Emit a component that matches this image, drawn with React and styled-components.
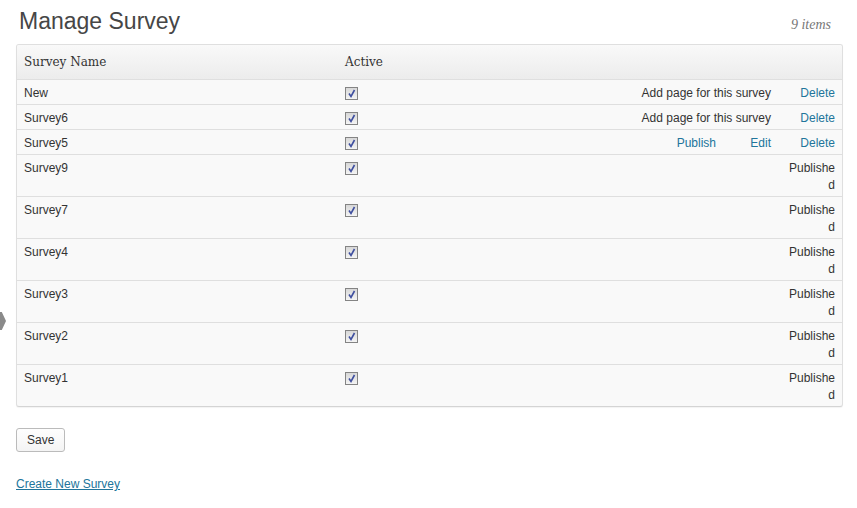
import React from "react";
import styled, { createGlobalStyle } from "styled-components";

const GlobalStyle = createGlobalStyle`
  body {
    margin: 0;
    background: #fff;
    font-family: "Liberation Sans", Arial, sans-serif;
    font-size: 12px;
    color: #333;
  }
`;

const Page = styled.div`
  position: relative;
  padding: 7px 14px 0 16px;
`;

// flèche du menu latéral, posée sur le bord gauche
const MenuArrow = styled.span`
  position: absolute;
  left: 0;
  top: 312px;
  width: 6px;
  height: 18px;
  background: #8a8a8a;
  clip-path: polygon(0 0, 30% 0, 100% 50%, 30% 100%, 0 100%);
`;

const Header = styled.div`
  display: flex;
  justify-content: space-between;
  align-items: baseline;
  height: 37px;
`;

const Title = styled.h2`
  margin: 0 0 0 3px;
  font-size: 23px;
  font-weight: normal;
  line-height: 29px;
  color: #464646;
`;

const Count = styled.span`
  margin-right: 12px;
  font-family: "Liberation Serif", Georgia, serif;
  font-style: italic;
  font-size: 14px;
  color: #777;
`;

const Table = styled.div`
  border: 1px solid #dfdfdf;
  border-bottom-color: #d4d4d4;
  border-radius: 3px;
  background: #f9f9f9;
  box-shadow: 0 1px 1px rgba(0, 0, 0, 0.05);
  overflow: hidden;
`;

const Row = styled.div`
  display: grid;
  grid-template-columns: 320px 1fr 60px 55px 62px;
  border-top: 1px solid #dfdfdf;

  &:first-child {
    border-top: none;
  }
`;

const HeadRow = styled(Row)`
  background: linear-gradient(to bottom, #f9f9f9, #ececec);
`;

const HeadCell = styled.div`
  padding: 0 8px;
  line-height: 34px;
  font-family: "DejaVu Serif", Georgia, serif;
  font-size: 12px;
  color: #333;

  &:first-child {
    padding-left: 7px;
  }
`;

const Cell = styled.div`
  padding: 5px 9px 2px 8px;
  line-height: 17px;
  text-align: ${(p) => p.$align || "left"};
  overflow-wrap: anywhere;
  color: #333;

  &:first-child {
    padding-left: 7px;
  }

  &:last-child {
    padding-right: 7px;
  }
`;

// cellule "Add page" : déborde vers la gauche sans passer à la ligne
const WideCell = styled(Cell)`
  grid-column: 3 / span 2;
  display: flex;
  justify-content: flex-end;
  white-space: nowrap;
  min-width: 0;
`;

const ActionLink = styled.a`
  color: #21759b;
  text-decoration: none;
  cursor: pointer;
`;

const CheckBox = styled.span`
  display: inline-block;
  box-sizing: border-box;
  width: 13px;
  height: 13px;
  margin-top: 2px;
  border: 1px solid #848484;
  background: linear-gradient(to bottom, #d8d8d8, #f4f4f4);
  vertical-align: top;

  svg {
    display: block;
  }
`;

const SaveButton = styled.button`
  margin-top: 21px;
  height: 24px;
  padding: 0 10px;
  font-family: "Liberation Sans", Arial, sans-serif;
  font-size: 12px;
  color: #333;
  background: linear-gradient(to bottom, #fefefe, #f4f4f4);
  border: 1px solid #bbb;
  border-radius: 3px;
`;

const CreateLink = styled.a`
  display: inline-block;
  margin-top: 25px;
  font-size: 12px;
  color: #21759b;
  text-decoration: underline;
`;

const surveys = [
  { name: "New", status: "draft" },
  { name: "Survey6", status: "draft" },
  { name: "Survey5", status: "ready" },
  { name: "Survey9", status: "published" },
  { name: "Survey7", status: "published" },
  { name: "Survey4", status: "published" },
  { name: "Survey3", status: "published" },
  { name: "Survey2", status: "published" },
  { name: "Survey1", status: "published" },
];

const Checked = () => (
  <CheckBox>
    <svg width="11" height="11" viewBox="0 0 11 11">
      <path d="M3 5.5 L5 8.5 L8.5 2" fill="none" stroke="#3f4f9f" strokeWidth="1.6" />
    </svg>
  </CheckBox>
);

const Actions = ({ status }) => {
  if (status === "draft") {
    return (
      <>
        <WideCell>Add page for this survey</WideCell>
        <Cell $align="right"><ActionLink>Delete</ActionLink></Cell>
      </>
    );
  }
  if (status === "ready") {
    return (
      <>
        <Cell $align="right"><ActionLink>Publish</ActionLink></Cell>
        <Cell $align="right"><ActionLink>Edit</ActionLink></Cell>
        <Cell $align="right"><ActionLink>Delete</ActionLink></Cell>
      </>
    );
  }
  return (
    <>
      <Cell />
      <Cell />
      <Cell $align="right">Published</Cell>
    </>
  );
};

const App = () => (
  <Page>
    <GlobalStyle />
    <MenuArrow />
    <Header>
      <Title>Manage Survey</Title>
      <Count>9 items</Count>
    </Header>

    <Table>
      <HeadRow>
        <HeadCell>Survey Name</HeadCell>
        <HeadCell>Active</HeadCell>
        <HeadCell />
        <HeadCell />
        <HeadCell />
      </HeadRow>
      {surveys.map((s) => (
        <Row key={s.name}>
          <Cell>{s.name}</Cell>
          <Cell><Checked /></Cell>
          <Actions status={s.status} />
        </Row>
      ))}
    </Table>

    <SaveButton type="button">Save</SaveButton>
    <br />
    <CreateLink>Create New Survey</CreateLink>
  </Page>
);

export default App;
